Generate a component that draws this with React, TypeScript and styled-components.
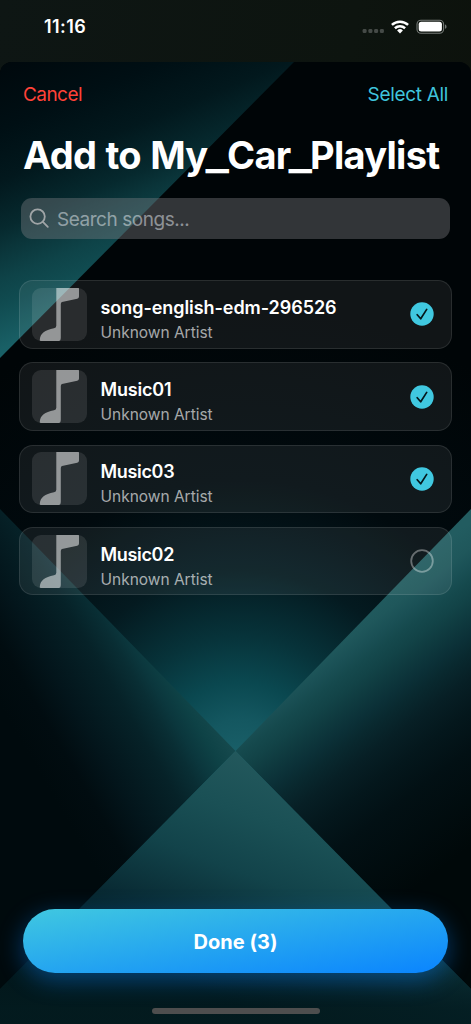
import React, { useState } from "react";
import styled, { createGlobalStyle } from "styled-components";

const GlobalStyle = createGlobalStyle`
  * { box-sizing: border-box; }
  body { margin: 0; background: #0c120d; }
  button { border: 0; padding: 0; margin: 0; background: none; font: inherit; color: inherit; cursor: pointer; }
`;

const Screen = styled.div`
  width: 471px;
  height: 1024px;
  display: flex;
  flex-direction: column;
  overflow: hidden;
  font-family: Inter, "Liberation Sans", sans-serif;
  color: #fff;
  background: linear-gradient(100deg, #0e1614 0%, #0d140f 55%, #0c0f09 100%);
`;

const StatusBar = styled.header`
  flex: none;
  height: 62px;
  padding: 0 24px 9px 44px;
  display: flex;
  align-items: center;
  justify-content: space-between;
`;

const Time = styled.span`
  font-size: 18px;
  font-weight: 600;
  line-height: 22px;
  letter-spacing: 0.45px;
`;

const StatusIcons = styled.svg`
  display: block;
  width: 86px;
  height: 18px;
`;

const Sheet = styled.main`
  position: relative;
  isolation: isolate;
  flex: 1;
  display: flex;
  flex-direction: column;
  border-radius: 12px 12px 0 0;
  overflow: hidden;
  background: #000507;
`;

const Backdrop = styled.svg`
  position: absolute;
  inset: 0;
  z-index: -1;
`;

const Toolbar = styled.div`
  display: flex;
  justify-content: space-between;
  padding: 21px 23px 0;
  height: 45px;
`;

const TextButton = styled.button<{ $color: string; $spacing: string }>`
  font-size: 19px;
  line-height: 24px;
  height: 24px;
  letter-spacing: ${(p) => p.$spacing};
  color: ${(p) => p.$color};
`;

const Title = styled.h1`
  margin: 24px 0 0 23px;
  font-size: 38px;
  font-weight: 700;
  line-height: 48px;
  letter-spacing: -0.72px;
  word-spacing: 1px;
  white-space: nowrap;
`;

const Underscore = styled.span`
  display: inline-block;
  margin: 0 1.4px 0 0.8px;
  transform: translateY(-0.5px) scaleX(1.3);
`;

const SearchField = styled.label`
  margin: 19px 21px 0;
  height: 41px;
  padding-left: 8px;
  display: flex;
  align-items: center;
  gap: 7px;
  border-radius: 11px;
  background: rgba(128, 130, 134, 0.39);
`;

const SearchInput = styled.input`
  flex: 1;
  min-width: 0;
  border: 0;
  outline: 0;
  padding: 2px 0 0;
  background: none;
  color: #fff;
  font: 400 19px/24px Inter, "Liberation Sans", sans-serif;
  letter-spacing: -0.46px;
  &::placeholder { color: rgba(235, 240, 245, 0.5); opacity: 1; }
`;

const SongList = styled.ul`
  list-style: none;
  margin: 41px 19px 0;
  padding: 0;
  display: flex;
  flex-direction: column;
  gap: 13.7px;
`;

const SongRow = styled.li`
  height: 68.6px;
  padding: 0 17px 0 12px;
  display: flex;
  align-items: center;
  border-radius: 14px;
  border: 1px solid rgba(255, 255, 255, 0.1);
  background: rgba(255, 255, 255, 0.065);
`;

const Artwork = styled.div`
  flex: none;
  width: 55px;
  height: 53px;
  margin-right: 13.5px;
  border-radius: 9px;
  background: rgba(255, 255, 255, 0.1);
  overflow: hidden;
  svg { display: block; }
`;

const SongText = styled.div`
  flex: 1;
  display: flex;
  flex-direction: column;
  gap: 4px;
  padding-top: 10px;
`;

const SongTitle = styled.span<{ $spacing: string }>`
  font-size: 18px;
  font-weight: 600;
  line-height: 23px;
  letter-spacing: ${(p) => p.$spacing};
`;

const Artist = styled.span`
  font-size: 15.5px;
  line-height: 20px;
  letter-spacing: -0.02px;
  color: rgba(255, 255, 255, 0.64);
`;

const Toggle = styled.button`
  width: 24px;
  height: 24px;
  svg { display: block; }
`;

const Footer = styled.footer`
  margin-top: auto;
  height: 115px;
  padding: 0 23px;
  display: flex;
  flex-direction: column;
  align-items: center;
`;

const DoneButton = styled.button`
  width: 100%;
  height: 64px;
  flex: none;
  padding-top: 1px;
  border-radius: 32px;
  background: linear-gradient(to bottom right, #40c8e0, #0a84ff);
  box-shadow: 0 7px 24px rgba(10, 132, 255, 0.42);
  font-size: 20px;
  font-weight: 700;
  line-height: 24px;
  letter-spacing: 0.05px;
  color: #fff;
`;

const HomeIndicator = styled.div`
  width: 168px;
  height: 6px;
  margin-top: 35px;
  border-radius: 3px;
  background: #4e4e4e;
`;

const BackdropArt = () => (
  <Backdrop width="471" height="962" viewBox="0 62 471 962" aria-hidden="true">
    <defs>
      <linearGradient id="corner" gradientUnits="userSpaceOnUse" x1="21.7" y1="52.4" x2="123.5" y2="299">
        <stop offset="0" stopColor="#00080c" />
        <stop offset="0.235" stopColor="#000f14" />
        <stop offset="0.415" stopColor="#02181d" />
        <stop offset="0.58" stopColor="#06292e" />
        <stop offset="0.65" stopColor="#0a3439" />
        <stop offset="0.76" stopColor="#0e4348" />
        <stop offset="0.84" stopColor="#104b50" />
        <stop offset="1" stopColor="#196066" />
      </linearGradient>
      <radialGradient id="glow" gradientUnits="userSpaceOnUse" cx="240" cy="765" r="460">
        <stop offset="0" stopColor="#1b626b" />
        <stop offset="0.1" stopColor="#145760" />
        <stop offset="0.18" stopColor="#0a4850" />
        <stop offset="0.28" stopColor="#07333a" />
        <stop offset="0.42" stopColor="#041a20" />
        <stop offset="0.62" stopColor="#010a0e" />
        <stop offset="1" stopColor="#000507" />
      </radialGradient>
      <linearGradient id="left" gradientUnits="userSpaceOnUse" x1="225" y1="737" x2="70" y2="827">
        <stop offset="0" stopColor="#15494d" />
        <stop offset="0.1" stopColor="#0e4246" />
        <stop offset="0.2" stopColor="#0b373d" />
        <stop offset="0.27" stopColor="#092e34" />
        <stop offset="0.4" stopColor="#062228" />
        <stop offset="0.65" stopColor="#03151b" />
        <stop offset="0.82" stopColor="#010c10" />
        <stop offset="1" stopColor="#000a0d" />
      </linearGradient>
      <linearGradient id="right" gradientUnits="userSpaceOnUse" x1="353" y1="610" x2="509" y2="818">
        <stop offset="0" stopColor="#225c60" />
        <stop offset="0.08" stopColor="#1f575b" />
        <stop offset="0.13" stopColor="#1a5055" />
        <stop offset="0.18" stopColor="#15494d" />
        <stop offset="0.23" stopColor="#124347" />
        <stop offset="0.28" stopColor="#0f3b40" />
        <stop offset="0.35" stopColor="#0b3037" />
        <stop offset="0.4" stopColor="#09292f" />
        <stop offset="0.48" stopColor="#071f25" />
        <stop offset="0.58" stopColor="#04171c" />
        <stop offset="0.7" stopColor="#021014" />
        <stop offset="1" stopColor="#000809" />
      </linearGradient>
      <linearGradient id="floor" gradientUnits="userSpaceOnUse" x1="275" y1="751" x2="185" y2="985">
        <stop offset="0" stopColor="#255a5e" />
        <stop offset="0.28" stopColor="#1a5055" />
        <stop offset="0.5" stopColor="#12434a" />
        <stop offset="0.75" stopColor="#092b34" />
        <stop offset="1" stopColor="#02171b" />
      </linearGradient>
      <linearGradient id="floorShade" x1="0" y1="0" x2="0" y2="1">
        <stop offset="0.65" stopColor="#021518" stopOpacity="0" />
        <stop offset="0.95" stopColor="#031b1f" stopOpacity="0.85" />
      </linearGradient>
    </defs>
    <rect y="62" width="471" height="962" fill="url(#glow)" />
    <path d="M0 62H294L0 358Z" fill="url(#corner)" />
    <path d="M0 509L235.5 751L0 989Z" fill="url(#left)" />
    <path d="M471 509L235.5 751L471 989Z" fill="url(#right)" />
    <path d="M235.5 751L471 989V1024H0V989Z" fill="url(#floor)" />
    <path d="M235.5 751L471 989V1024H0V989Z" fill="url(#floorShade)" />
  </Backdrop>
);

const StatusGlyphs = () => (
  <StatusIcons viewBox="361 17 86 18" aria-hidden="true">
    <g fill="#454a47">
      {[362.6, 368.4, 374.1, 379.9].map((x) => (
        <rect key={x} x={x} y="28" width="4" height="4" rx="1.3" />
      ))}
    </g>
    <g fill="none" stroke="#fff" strokeWidth="2.5">
      <path d="M391.9 23.9a11.8 11.8 0 0 1 16.2 0" />
      <path d="M394.9 27.2a7.6 7.6 0 0 1 10.2 0" />
    </g>
    <path d="M400 32.4l-2.9-3a4.3 4.3 0 0 1 5.8 0z" fill="#fff" />
    <rect x="417" y="19.2" width="26.6" height="13" rx="4" fill="none" stroke="#747976" strokeWidth="1.1" />
    <rect x="418.7" y="20.8" width="23.2" height="9.8" rx="2.5" fill="#fff" />
    <path d="M445 23.6v4.2c1-.4 1.5-1.2 1.5-2.1s-.5-1.7-1.5-2.1z" fill="#747976" />
  </StatusIcons>
);

const SearchGlyph = () => (
  <svg width="21" height="21" viewBox="0 0 21 21" fill="none" stroke="#a0a5a7" strokeWidth="1.8" strokeLinecap="round" aria-hidden="true">
    <circle cx="8.6" cy="8.6" r="7.2" />
    <path d="M13.9 13.9L18.8 18.8" />
  </svg>
);

const NoteGlyph = () => (
  <svg width="55" height="53" viewBox="0 0 55 53" aria-hidden="true">
    <path
      d="M24.3 0H47v8.4q0 1.9-1.8 2.3L30 14.1q-1.2.4-1.2 1.8V49.5q0 3.5-2.1 3.5H7.8v-1.5c.7-6.3 4.8-9.3 14.2-11.2q2.3-.4 2.3-2.6z"
      fill="rgba(255,255,255,0.5)"
    />
  </svg>
);

const CheckGlyph = ({ checked }: { checked: boolean }) => (
  <svg width="24" height="24" viewBox="0 0 24 24" fill="none" aria-hidden="true">
    {checked ? (
      <>
        <circle cx="12" cy="12" r="11.7" fill="#40c8e0" />
        <path d="M7.2 12.7L10.7 16.8L16.7 7.4" stroke="#04171b" strokeWidth="1.7" strokeLinecap="round" strokeLinejoin="round" />
      </>
    ) : (
      <circle cx="12" cy="12" r="10.8" stroke="rgba(255,255,255,0.36)" strokeWidth="1.8" />
    )}
  </svg>
);

const songs = [
  { title: "song-english-edm-296526", spacing: "-0.06px" },
  { title: "Music01", spacing: "-0.2px" },
  { title: "Music03", spacing: "-0.32px" },
  { title: "Music02", spacing: "-0.32px" },
];

export default function App() {
  const [selected, setSelected] = useState<boolean[]>([true, true, true, false]);
  const count = selected.filter(Boolean).length;
  const toggle = (index: number) => setSelected((s) => s.map((v, i) => (i === index ? !v : v)));

  return (
    <>
      <GlobalStyle />
      <Screen>
        <StatusBar>
          <Time>11:16</Time>
          <StatusGlyphs />
        </StatusBar>
        <Sheet>
          <BackdropArt />
          <Toolbar>
            <TextButton $color="#ff4238" $spacing="-0.55px">Cancel</TextButton>
            <TextButton $color="#3fc4dc" $spacing="-0.32px" onClick={() => setSelected(songs.map(() => true))}>
              Select All
            </TextButton>
          </Toolbar>
          <Title>
            Add to My<Underscore>_</Underscore>Car<Underscore>_</Underscore>Playlist
          </Title>
          <SearchField>
            <SearchGlyph />
            <SearchInput placeholder="Search songs..." />
          </SearchField>
          <SongList>
            {songs.map((song, i) => (
              <SongRow key={song.title}>
                <Artwork>
                  <NoteGlyph />
                </Artwork>
                <SongText>
                  <SongTitle $spacing={song.spacing}>{song.title}</SongTitle>
                  <Artist>Unknown Artist</Artist>
                </SongText>
                <Toggle aria-label={song.title} onClick={() => toggle(i)}>
                  <CheckGlyph checked={selected[i]} />
                </Toggle>
              </SongRow>
            ))}
          </SongList>
          <Footer>
            <DoneButton>Done ({count})</DoneButton>
            <HomeIndicator />
          </Footer>
        </Sheet>
      </Screen>
    </>
  );
}
